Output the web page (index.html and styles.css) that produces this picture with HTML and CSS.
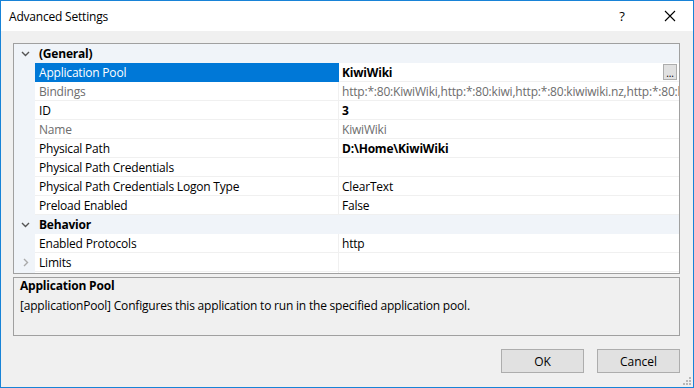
FILE: index.html
```html
<!DOCTYPE html>
<html lang="en">
<head>
    <meta charset="UTF-8">
    <title>Advanced Settings</title>
    <link rel="stylesheet" href="styles.css">
</head>
<body>

<div class="window">
    <div class="titlebar">
        <span class="title">Advanced Settings</span>
        <span class="help">?</span>
        <span class="close">
            <svg width="12" height="12" viewBox="0 0 12 12"><path d="M1 1 L11 11 M11 1 L1 11" stroke="#000" stroke-width="1.1" fill="none"/></svg>
        </span>
    </div>

    <div class="content">
        <div class="grid">
            <div class="row category">
                <span class="toggle"><svg width="9" height="6" viewBox="0 0 9 6"><path d="M1 1 L4.5 4.5 L8 1" stroke="#555" stroke-width="1.4" fill="none"/></svg></span>
                <span class="cat-name">(General)</span>
            </div>
            <div class="row selected">
                <span class="gutter"></span>
                <span class="name">Application Pool</span>
                <span class="value bold">KiwiWiki<span class="dots">...</span></span>
            </div>
            <div class="row readonly">
                <span class="gutter"></span>
                <span class="name">Bindings</span>
                <span class="value">http:*:80:KiwiWiki,http:*:80:kiwi,http:*:80:kiwiwiki.nz,http:*:80:kiv</span>
            </div>
            <div class="row">
                <span class="gutter"></span>
                <span class="name">ID</span>
                <span class="value bold">3</span>
            </div>
            <div class="row readonly">
                <span class="gutter"></span>
                <span class="name">Name</span>
                <span class="value">KiwiWiki</span>
            </div>
            <div class="row">
                <span class="gutter"></span>
                <span class="name">Physical Path</span>
                <span class="value bold">D:\Home\KiwiWiki</span>
            </div>
            <div class="row">
                <span class="gutter"></span>
                <span class="name">Physical Path Credentials</span>
                <span class="value"></span>
            </div>
            <div class="row">
                <span class="gutter"></span>
                <span class="name">Physical Path Credentials Logon Type</span>
                <span class="value">ClearText</span>
            </div>
            <div class="row">
                <span class="gutter"></span>
                <span class="name">Preload Enabled</span>
                <span class="value">False</span>
            </div>
            <div class="row category">
                <span class="toggle"><svg width="9" height="6" viewBox="0 0 9 6"><path d="M1 1 L4.5 4.5 L8 1" stroke="#555" stroke-width="1.4" fill="none"/></svg></span>
                <span class="cat-name">Behavior</span>
            </div>
            <div class="row">
                <span class="gutter"></span>
                <span class="name">Enabled Protocols</span>
                <span class="value">http</span>
            </div>
            <div class="row">
                <span class="gutter"><svg width="6" height="9" viewBox="0 0 6 9"><path d="M1 1 L4.5 4.5 L1 8" stroke="#aaa" stroke-width="1.4" fill="none"/></svg></span>
                <span class="name">Limits</span>
                <span class="value"></span>
            </div>
            <div class="filler">
                <span class="gutter"></span>
                <span class="name"></span>
                <span class="value"></span>
            </div>
        </div>

        <div class="description">
            <div class="desc-title">Application Pool</div>
            <div class="desc-text">[applicationPool] Configures this application to run in the specified application pool.</div>
        </div>

        <div class="buttons">
            <button class="btn">OK</button>
            <button class="btn">Cancel</button>
        </div>
        <span class="grip">
            <svg width="8" height="8" viewBox="0 0 8 8" fill="#b8b8b8">
                <rect x="6" y="0" width="2" height="2"/>
                <rect x="3" y="3" width="2" height="2"/><rect x="6" y="3" width="2" height="2"/>
                <rect x="0" y="6" width="2" height="2"/><rect x="3" y="6" width="2" height="2"/><rect x="6" y="6" width="2" height="2"/>
            </svg>
        </span>
    </div>
</div>

</body>
</html>
```

FILE: styles.css
```css
* {
    box-sizing: border-box;
}
body {
    margin: 0;
    font-family: "Open Sans", "Noto Sans", sans-serif;
    font-size: 12px;
    color: #000;
    background: #f0f0f0;
}
.window {
    width: 694px;
    height: 388px;
    border: 1px solid #1883d7;
    display: flex;
    flex-direction: column;
    background: #f0f0f0;
}
.titlebar {
    height: 30px;
    background: #fff;
    display: flex;
    align-items: center;
    padding-left: 8px;
}
.title {
    flex: 1;
    font-size: 12px;
    letter-spacing: -0.2px;
}
.help {
    width: 46px;
    text-align: center;
    font-size: 13px;
    margin-right: 2px;
}
.close {
    width: 46px;
    display: flex;
    justify-content: center;
}
.content {
    flex: 1;
    position: relative;
    padding: 12px 13px 0 12px;
}
.grid {
    border: 1px solid #a0a0a0;
    background: #fff;
    height: 231px;
    display: flex;
    flex-direction: column;
    overflow: hidden;
}
.row {
    display: flex;
    height: 19px;
    line-height: 18px;
    flex: none;
}
.row .gutter {
    width: 21px;
    background: #f0f4f9;
    flex: none;
    display: flex;
    align-items: center;
    justify-content: center;
    padding-left: 2px;
}
.row .name {
    width: 304px;
    flex: none;
    padding: 1px 0 0 4px;
    border-bottom: 1px solid #f0f0f0;
    border-right: 1px solid #f0f0f0;
    white-space: nowrap;
    letter-spacing: -0.2px;
}
.row .value {
    flex: 1;
    padding: 1px 0 0 3px;
    border-bottom: 1px solid #f0f0f0;
    white-space: nowrap;
    overflow: hidden;
    position: relative;
    letter-spacing: -0.2px;
}
.bold {
    font-weight: bold;
}
.row.readonly {
    color: #6d6d6d;
}
.row.selected .name {
    background: #0078d7;
    color: #fff;
    border-bottom-color: #0078d7;
    border-right-color: #0078d7;
}
.dots {
    position: absolute;
    right: 2px;
    top: 1px;
    width: 14px;
    height: 16px;
    background: #e1e1e1;
    border: 1px solid #adadad;
    font-weight: normal;
    font-size: 10px;
    line-height: 16px;
    text-align: center;
}
.row.category {
    background: #f0f4f9;
    font-weight: bold;
}
.toggle {
    width: 21px;
    display: flex;
    align-items: center;
    justify-content: center;
    padding-left: 2px;
}
.cat-name {
    padding: 1px 0 0 4px;
    letter-spacing: -0.2px;
}
.filler {
    flex: 1;
    display: flex;
}
.filler .gutter {
    width: 21px;
    background: #f0f4f9;
}
.filler .name {
    width: 304px;
    border-right: 1px solid #f0f0f0;
}
.description {
    margin-top: 3px;
    height: 59px;
    border: 1px solid #a0a0a0;
    padding: 1px 6px 0 6px;
}
.desc-title {
    font-weight: bold;
    line-height: 14px;
    letter-spacing: -0.2px;
}
.desc-text {
    margin-top: 4px;
    line-height: 18px;
    letter-spacing: -0.2px;
}
.buttons {
    display: flex;
    justify-content: flex-end;
    gap: 13px;
    margin-top: 13px;
}
.btn {
    width: 83px;
    height: 24px;
    background: #e1e1e1;
    border: 1px solid #adadad;
    font-family: inherit;
    font-size: 12px;
    padding: 0;
    color: #000;
}
.grip {
    position: absolute;
    right: 2px;
    bottom: 2px;
    line-height: 0;
}
```
